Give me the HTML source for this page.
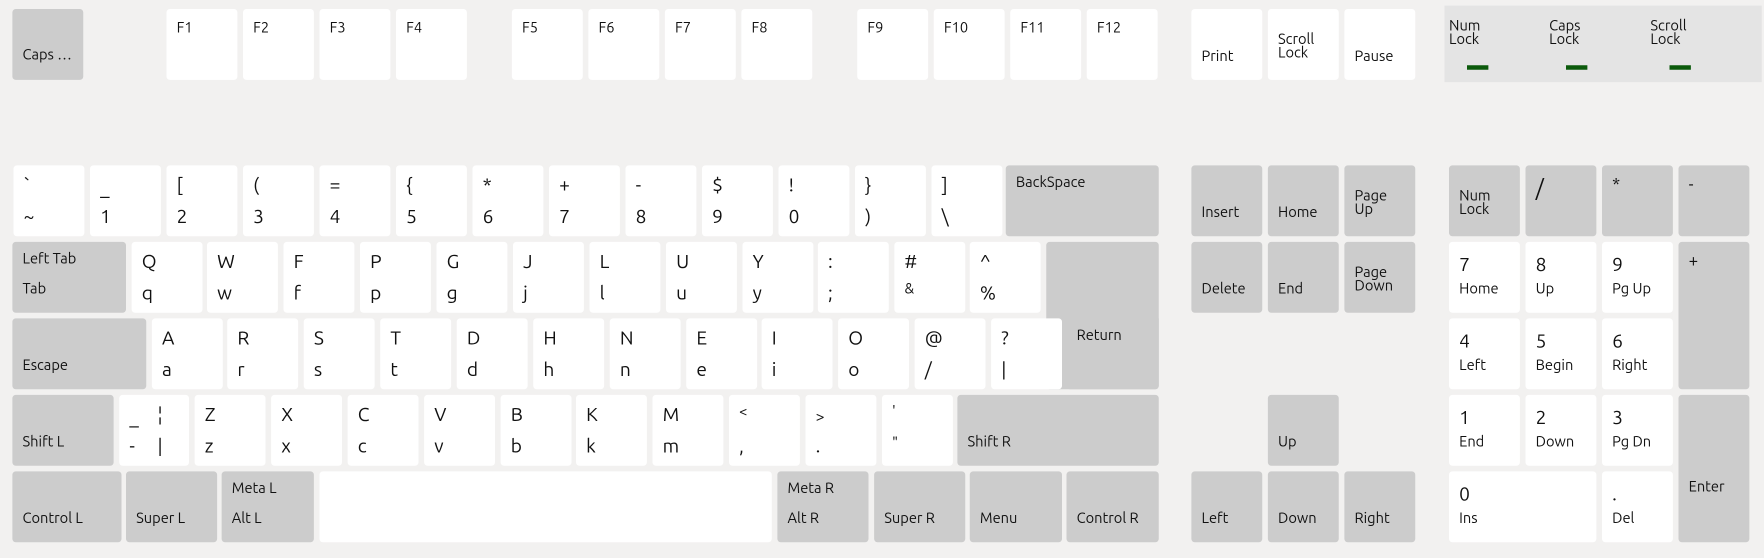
<!DOCTYPE html>
<html><head><meta charset="utf-8"><style>
html,body{margin:0;padding:0;background:#f2f1f0;overflow:hidden}
body{width:1764px;height:558px}
#w{position:absolute;left:0;top:0;width:1568px;height:496px;transform:scale(1.125);transform-origin:0 0;font-family:"Ubuntu","Liberation Sans","DejaVu Sans",sans-serif;color:#111}
.k{position:absolute;width:63px;height:63px;background:#fff;border-radius:3px}
.g{background:#cccccc}
.k span{position:absolute;left:9px;white-space:nowrap;line-height:1}
.t{top:9px;font-size:17px}
.b{top:37px;font-size:17px}
.s{top:37px;font-size:13px}
.st{top:9px;font-size:13px}
.f{top:11px;font-size:13px}
.d{font-size:13px;line-height:12px!important}
#ind{position:absolute;left:1284px;top:5px;width:282px;height:68px;background:#e4e4e4}
#ind span{position:absolute;font-size:13px;line-height:12px;top:12px}
#ind i{position:absolute;top:53px;width:19px;height:4px;background:#0b5a0b}
</style></head><body><div id="w">
<div class="k g" style="left:11px;top:8px"><span class="s" style="top:35px">Caps …</span></div>
<div class="k" style="left:148px;top:8px"><span class="f">F1</span></div>
<div class="k" style="left:216px;top:8px"><span class="f">F2</span></div>
<div class="k" style="left:284px;top:8px"><span class="f">F3</span></div>
<div class="k" style="left:352px;top:8px"><span class="f">F4</span></div>
<div class="k" style="left:455px;top:8px"><span class="f">F5</span></div>
<div class="k" style="left:523px;top:8px"><span class="f">F6</span></div>
<div class="k" style="left:591px;top:8px"><span class="f">F7</span></div>
<div class="k" style="left:659px;top:8px"><span class="f">F8</span></div>
<div class="k" style="left:762px;top:8px"><span class="f">F9</span></div>
<div class="k" style="left:830px;top:8px"><span class="f">F10</span></div>
<div class="k" style="left:898px;top:8px"><span class="f">F11</span></div>
<div class="k" style="left:966px;top:8px"><span class="f">F12</span></div>
<div class="k" style="left:1059px;top:8px"><span class="s" style="top:36px">Print</span></div>
<div class="k" style="left:1127px;top:8px"><span class="d" style="top:21px">Scroll<br>Lock</span></div>
<div class="k" style="left:1195px;top:8px"><span class="s" style="top:36px">Pause</span></div>
<div id="ind"><span style="left:4px">Num<br>Lock</span><span style="left:93px">Caps<br>Lock</span><span style="left:183px">Scroll<br>Lock</span><i style="left:20px"></i><i style="left:108px"></i><i style="left:200px"></i></div>

<div class="k" style="left:12px;top:147px"><span class="t">`</span><span class="b">~</span></div>
<div class="k" style="left:80px;top:147px"><span class="t" style="top:12px">_</span><span class="b">1</span></div>
<div class="k" style="left:148px;top:147px"><span class="t">[</span><span class="b">2</span></div>
<div class="k" style="left:216px;top:147px"><span class="t">(</span><span class="b">3</span></div>
<div class="k" style="left:284px;top:147px"><span class="t">=</span><span class="b">4</span></div>
<div class="k" style="left:352px;top:147px"><span class="t">{</span><span class="b">5</span></div>
<div class="k" style="left:420px;top:147px"><span class="t">*</span><span class="b">6</span></div>
<div class="k" style="left:488px;top:147px"><span class="t">+</span><span class="b">7</span></div>
<div class="k" style="left:556px;top:147px"><span class="t">-</span><span class="b">8</span></div>
<div class="k" style="left:624px;top:147px"><span class="t">$</span><span class="b">9</span></div>
<div class="k" style="left:692px;top:147px"><span class="t">!</span><span class="b">0</span></div>
<div class="k" style="left:760px;top:147px"><span class="t">}</span><span class="b">)</span></div>
<div class="k" style="left:828px;top:147px"><span class="t">]</span><span class="b">\</span></div>
<div class="k g" style="left:894px;top:147px;width:136px"><span class="st">BackSpace</span></div>

<div class="k g" style="left:11px;top:215px;width:101px"><span class="st">Left Tab</span><span class="s" style="top:36px">Tab</span></div>
<div class="k" style="left:117px;top:215px"><span class="t">Q</span><span class="b">q</span></div>
<div class="k" style="left:184px;top:215px"><span class="t">W</span><span class="b">w</span></div>
<div class="k" style="left:252px;top:215px"><span class="t">F</span><span class="b">f</span></div>
<div class="k" style="left:320px;top:215px"><span class="t">P</span><span class="b">p</span></div>
<div class="k" style="left:388px;top:215px"><span class="t">G</span><span class="b">g</span></div>
<div class="k" style="left:456px;top:215px"><span class="t">J</span><span class="b">j</span></div>
<div class="k" style="left:524px;top:215px"><span class="t">L</span><span class="b">l</span></div>
<div class="k" style="left:592px;top:215px"><span class="t">U</span><span class="b">u</span></div>
<div class="k" style="left:660px;top:215px"><span class="t">Y</span><span class="b">y</span></div>
<div class="k" style="left:727px;top:215px"><span class="t">:</span><span class="b">;</span></div>
<div class="k" style="left:795px;top:215px"><span class="t">#</span><span class="s" style="top:36px">&amp;</span></div>
<div class="k" style="left:862px;top:215px"><span class="t">^</span><span class="b">%</span></div>
<div class="k g" style="left:930px;top:215px;width:100px;height:131px"></div>
<div class="k g" style="left:948px;top:283px;width:82px;height:63px;border-radius:0 0 3px 3px"><span class="st">Return</span></div>

<div class="k g" style="left:11px;top:283px;width:119px"><span class="s" style="top:36px">Escape</span></div>
<div class="k" style="left:135px;top:283px"><span class="t">A</span><span class="b">a</span></div>
<div class="k" style="left:202px;top:283px"><span class="t">R</span><span class="b">r</span></div>
<div class="k" style="left:270px;top:283px"><span class="t">S</span><span class="b">s</span></div>
<div class="k" style="left:338px;top:283px"><span class="t">T</span><span class="b">t</span></div>
<div class="k" style="left:406px;top:283px"><span class="t">D</span><span class="b">d</span></div>
<div class="k" style="left:474px;top:283px"><span class="t">H</span><span class="b">h</span></div>
<div class="k" style="left:542px;top:283px"><span class="t">N</span><span class="b">n</span></div>
<div class="k" style="left:610px;top:283px"><span class="t">E</span><span class="b">e</span></div>
<div class="k" style="left:677px;top:283px"><span class="t">I</span><span class="b">i</span></div>
<div class="k" style="left:745px;top:283px"><span class="t">O</span><span class="b">o</span></div>
<div class="k" style="left:813px;top:283px"><span class="t">@</span><span class="b">/</span></div>
<div class="k" style="left:881px;top:283px"><span class="t">?</span><span class="b">|</span></div>

<div class="k g" style="left:11px;top:351px;width:90px"><span class="s" style="top:36px">Shift L</span></div>
<div class="k" style="left:106px;top:351px;width:62px"><span class="t" style="top:12px">_</span><span class="t" style="left:34px">¦</span><span class="b">-</span><span class="b" style="left:34px">|</span></div>
<div class="k" style="left:173px;top:351px"><span class="t">Z</span><span class="b">z</span></div>
<div class="k" style="left:241px;top:351px"><span class="t">X</span><span class="b">x</span></div>
<div class="k" style="left:309px;top:351px"><span class="t">C</span><span class="b">c</span></div>
<div class="k" style="left:377px;top:351px"><span class="t">V</span><span class="b">v</span></div>
<div class="k" style="left:445px;top:351px"><span class="t">B</span><span class="b">b</span></div>
<div class="k" style="left:512px;top:351px"><span class="t">K</span><span class="b">k</span></div>
<div class="k" style="left:580px;top:351px"><span class="t">M</span><span class="b">m</span></div>
<div class="k" style="left:648px;top:351px"><span class="st">&lt;</span><span class="b">,</span></div>
<div class="k" style="left:716px;top:351px"><span class="t" style="font-size:14px;top:12px">&gt;</span><span class="b">.</span></div>
<div class="k" style="left:784px;top:351px"><span class="st">'</span><span class="s">"</span></div>
<div class="k g" style="left:851px;top:351px;width:179px"><span class="s" style="top:36px">Shift R</span></div>

<div class="k g" style="left:11px;top:419px;width:97px"><span class="s" style="top:36px">Control L</span></div>
<div class="k g" style="left:112px;top:419px;width:81px"><span class="s" style="top:36px">Super L</span></div>
<div class="k g" style="left:197px;top:419px;width:82px"><span class="st">Meta L</span><span class="s" style="top:36px">Alt L</span></div>
<div class="k" style="left:284px;top:419px;width:402px"></div>
<div class="k g" style="left:691px;top:419px;width:81px"><span class="st">Meta R</span><span class="s" style="top:36px">Alt R</span></div>
<div class="k g" style="left:777px;top:419px;width:81px"><span class="s" style="top:36px">Super R</span></div>
<div class="k g" style="left:862px;top:419px;width:82px"><span class="s" style="top:36px">Menu</span></div>
<div class="k g" style="left:948px;top:419px;width:82px"><span class="s" style="top:36px">Control R</span></div>

<div class="k g" style="left:1059px;top:147px"><span class="s" style="top:36px">Insert</span></div>
<div class="k g" style="left:1127px;top:147px"><span class="s" style="top:36px">Home</span></div>
<div class="k g" style="left:1195px;top:147px"><span class="d" style="top:21px">Page<br>Up</span></div>
<div class="k g" style="left:1059px;top:215px"><span class="s" style="top:36px">Delete</span></div>
<div class="k g" style="left:1127px;top:215px"><span class="s" style="top:36px">End</span></div>
<div class="k g" style="left:1195px;top:215px"><span class="d" style="top:21px">Page<br>Down</span></div>
<div class="k g" style="left:1127px;top:351px"><span class="s" style="top:36px">Up</span></div>
<div class="k g" style="left:1059px;top:419px"><span class="s" style="top:36px">Left</span></div>
<div class="k g" style="left:1127px;top:419px"><span class="s" style="top:36px">Down</span></div>
<div class="k g" style="left:1195px;top:419px"><span class="s" style="top:36px">Right</span></div>

<div class="k g" style="left:1288px;top:147px"><span class="d" style="top:21px">Num<br>Lock</span></div>
<div class="k g" style="left:1356px;top:147px"><span class="t" style="font-size:20px;top:10px">/</span></div>
<div class="k g" style="left:1424px;top:147px"><span class="st" style="font-size:15px">*</span></div>
<div class="k g" style="left:1492px;top:147px"><span class="st" style="font-size:15px">-</span></div>
<div class="k" style="left:1288px;top:215px"><span class="t" style="top:12px">7</span><span class="s" style="top:36px">Home</span></div>
<div class="k" style="left:1356px;top:215px"><span class="t" style="top:12px">8</span><span class="s" style="top:36px">Up</span></div>
<div class="k" style="left:1424px;top:215px"><span class="t" style="top:12px">9</span><span class="s" style="top:36px">Pg Up</span></div>
<div class="k g" style="left:1492px;top:215px;height:131px"><span class="st" style="font-size:15px">+</span></div>
<div class="k" style="left:1288px;top:283px"><span class="t" style="top:12px">4</span><span class="s" style="top:36px">Left</span></div>
<div class="k" style="left:1356px;top:283px"><span class="t" style="top:12px">5</span><span class="s" style="top:36px">Begin</span></div>
<div class="k" style="left:1424px;top:283px"><span class="t" style="top:12px">6</span><span class="s" style="top:36px">Right</span></div>
<div class="k" style="left:1288px;top:351px"><span class="t" style="top:12px">1</span><span class="s" style="top:36px">End</span></div>
<div class="k" style="left:1356px;top:351px"><span class="t" style="top:12px">2</span><span class="s" style="top:36px">Down</span></div>
<div class="k" style="left:1424px;top:351px"><span class="t" style="top:12px">3</span><span class="s" style="top:36px">Pg Dn</span></div>
<div class="k g" style="left:1492px;top:351px;height:131px"><span class="s" style="top:76px">Enter</span></div>
<div class="k" style="left:1288px;top:419px;width:131px"><span class="t" style="top:12px">0</span><span class="s" style="top:36px">Ins</span></div>
<div class="k" style="left:1424px;top:419px"><span class="t" style="top:12px">.</span><span class="s" style="top:36px">Del</span></div>
</div></body></html>
